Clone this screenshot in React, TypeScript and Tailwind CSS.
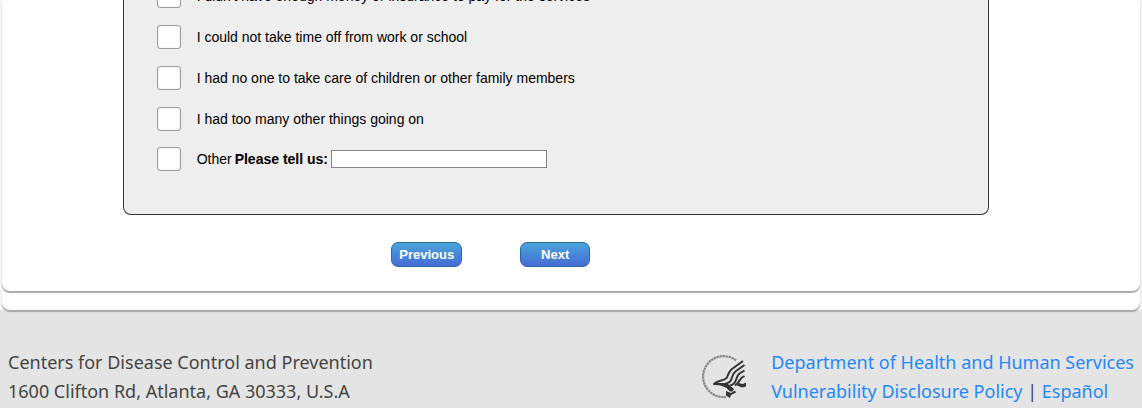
const reasons = [
  { id: "cost", label: "I didn't have enough money or insurance to pay for the services" },
  { id: "time", label: "I could not take time off from work or school" },
  { id: "care", label: "I had no one to take care of children or other family members" },
  { id: "busy", label: "I had too many other things going on" },
];

const checkboxClass =
  "size-6 shrink-0 appearance-none rounded-[3px] border border-[#9c9c9c] bg-white shadow-[inset_0_0_1px_#aaa] checked:bg-[#3f7fd8]";

const buttonClass =
  "h-[25px] rounded-[7px] border border-[#2a6a9c] bg-linear-to-b from-[#4ba3da] to-[#466bd6] text-center text-[13px] font-bold leading-5 text-white";

function HhsLogo() {
  return (
    <svg viewBox="0 0 48 48" className="size-12 shrink-0" fill="none" aria-hidden="true">
      <path
        d="M35 8.3A20.5 20.5 0 1 0 25 45"
        stroke="#858585"
        strokeWidth="2.2"
        strokeDasharray="2.4 0.6"
      />
      <g stroke="#333" strokeWidth="2" strokeLinejoin="round">
        <path d="M42 9L31 17C28 19.5 27 22.5 26 25.5C23 29.5 18 27.5 13 32C20 32 23 32 26 35L30 39" />
        <path d="M43.5 13L35 19C31.500 21.500 31.500 24 30.500 27C29.500 30 28 31 25 31.500L31 37" />
        <path d="M43.500 18.500L38.500 21.500C36 23.500 36 25.500 35 28C34 31 32 33 29 33.500" />
        <path d="M43.500 24L41 25.500C38.500 27.500 38.500 30.500 34 33.500" />
      </g>
      <path d="M13 31L25 31L33 37L31 40L26 36Z" fill="#333" />
      <path d="M37 31L42 32L45 30.500V34.500L41 35.500L36 33.500Z" fill="#333" />
      <path d="M25 39L30 41L34 38.500L35 40.500L30 43L29 46L25 43.500Z" fill="#333" />
    </svg>
  );
}

export default function App() {
  return (
    <div className="min-h-screen overflow-hidden bg-[#e4e4e4] font-['Liberation_Sans',Arial,sans-serif] text-sm text-black">
      <div className="bg-[#f6f6f6]">
        <div className="mx-0.5 rounded-b-lg bg-white pb-[19px] shadow-[0_2px_1px_#a8a8a8]">
          <main className="rounded-b-lg bg-white pb-6 shadow-[0_2px_1px_#a8a8a8]">
            <form onSubmit={(e) => e.preventDefault()}>
              <fieldset className="mr-[13.3%] ml-[10.6%] flex flex-col gap-4 rounded-b-lg border border-t-0 border-[#333] bg-[#eee] px-[33px] pb-[43px]">
                <legend className="sr-only">Reasons</legend>
                {reasons.map((reason) => (
                  <div key={reason.id} className="flex h-[25px] items-center gap-4 first-of-type:-mt-[17px]">
                    <input type="checkbox" id={reason.id} className={checkboxClass} />
                    <label htmlFor={reason.id}>{reason.label}</label>
                  </div>
                ))}
                <div className="flex items-center gap-4">
                  <input type="checkbox" id="other" className={checkboxClass} />
                  <div className="flex items-center gap-[3px]">
                    <label htmlFor="other">Other</label>
                    <label htmlFor="other-text" className="font-bold">
                      Please tell us:
                    </label>
                    <input type="text" id="other-text" className="h-[18px] w-[216px] border border-[#858585] bg-white px-1" />
                  </div>
                </div>
              </fieldset>
              <div className="mt-[27px] ml-[34.2%] flex gap-[58px]">
                <button type="button" className={`${buttonClass} w-[71px]`}>
                  Previous
                </button>
                <button type="submit" className={`${buttonClass} w-[70px]`}>
                  Next
                </button>
              </div>
            </form>
          </main>
        </div>
      </div>

      <footer className="flex items-start justify-between pt-[38px] pr-2 pl-2 font-['Noto_Sans',sans-serif] text-lg leading-[29px] text-[#444]">
        <address className="not-italic">
          Centers for Disease Control and Prevention
          <br />
          1600 Clifton Rd, Atlanta, GA 30333, U.S.A
        </address>
        <div className="flex gap-[22px]">
          <div className="pt-1">
            <HhsLogo />
          </div>
          <div>
            <a href="#hhs" className="text-[#2588f8]">
              Department of Health and Human Services
            </a>
            <br />
            <a href="#disclosure" className="text-[#2588f8]">
              Vulnerability Disclosure Policy
            </a>{" "}
            |{" "}
            <a href="#es" lang="es" className="text-[#2588f8]">
              Español
            </a>
          </div>
        </div>
      </footer>
    </div>
  );
}
